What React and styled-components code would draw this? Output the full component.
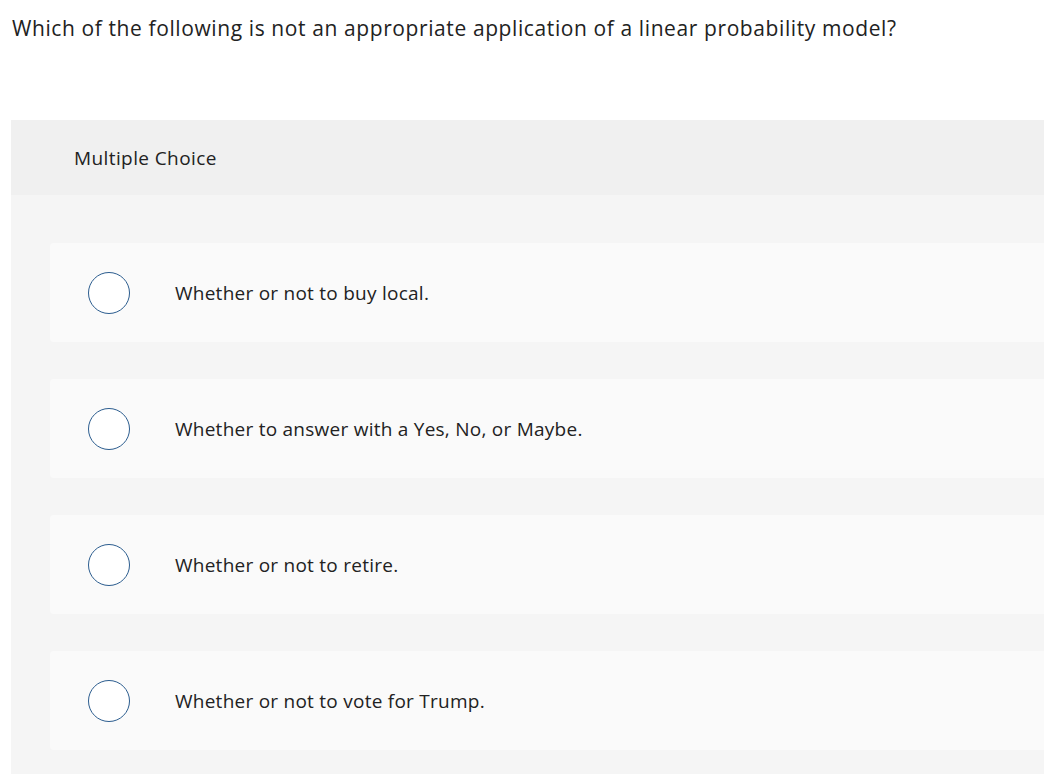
import styled, { createGlobalStyle } from "styled-components";

const GlobalStyle = createGlobalStyle`
  html, body {
    margin: 0;
    padding: 0;
    background: #ffffff;
    overflow: hidden;
  }
  body {
    font-family: "Open Sans", "Liberation Sans", sans-serif;
    color: #222222;
  }
`;

const Page = styled.div`
  width: 1044px;
  height: 774px;
  overflow: hidden;
`;

const Question = styled.p`
  margin: 0;
  padding: 13px 0 0 12px;
  height: 120px;
  box-sizing: border-box;
  font-size: 21px;
  letter-spacing: 0.6px;
  line-height: 30px;
  color: #222222;
  white-space: nowrap;
`;

const Panel = styled.section`
  margin-left: 11px;
  display: flex;
  flex-direction: column;
`;

const PanelHeader = styled.div`
  height: 75px;
  background: #f0f0f0;
  display: flex;
  align-items: center;
  padding-left: 63px;
  font-size: 19px;
  letter-spacing: 0.4px;
  color: #222222;
`;

const Options = styled.div`
  background: #f5f5f5;
  padding: 48px 0 24px 39px;
  display: flex;
  flex-direction: column;
  gap: 37px;
`;

const Option = styled.label`
  height: 99px;
  background: #fafafa;
  border-radius: 4px 0 0 4px;
  display: flex;
  align-items: center;
  padding-left: 38px;
  gap: 45px;
  cursor: pointer;
`;

const Radio = styled.span`
  width: 40px;
  height: 40px;
  flex: 0 0 auto;
  border: 1.5px solid #2c5d8f;
  border-radius: 50%;
  background: #ffffff;
`;

const OptionText = styled.span`
  font-size: 19px;
  letter-spacing: 0.25px;
  color: #222222;
`;

const choices = [
  "Whether or not to buy local.",
  "Whether to answer with a Yes, No, or Maybe.",
  "Whether or not to retire.",
  "Whether or not to vote for Trump.",
];

export default function App() {
  return (
    <>
      <GlobalStyle />
      <Page>
        <Question>
          Which of the following is not an appropriate application of a linear
          probability model?
        </Question>
        <Panel>
          <PanelHeader>Multiple Choice</PanelHeader>
          <Options>
            {choices.map((c) => (
              <Option key={c}>
                <Radio />
                <OptionText>{c}</OptionText>
              </Option>
            ))}
          </Options>
        </Panel>
      </Page>
    </>
  );
}
